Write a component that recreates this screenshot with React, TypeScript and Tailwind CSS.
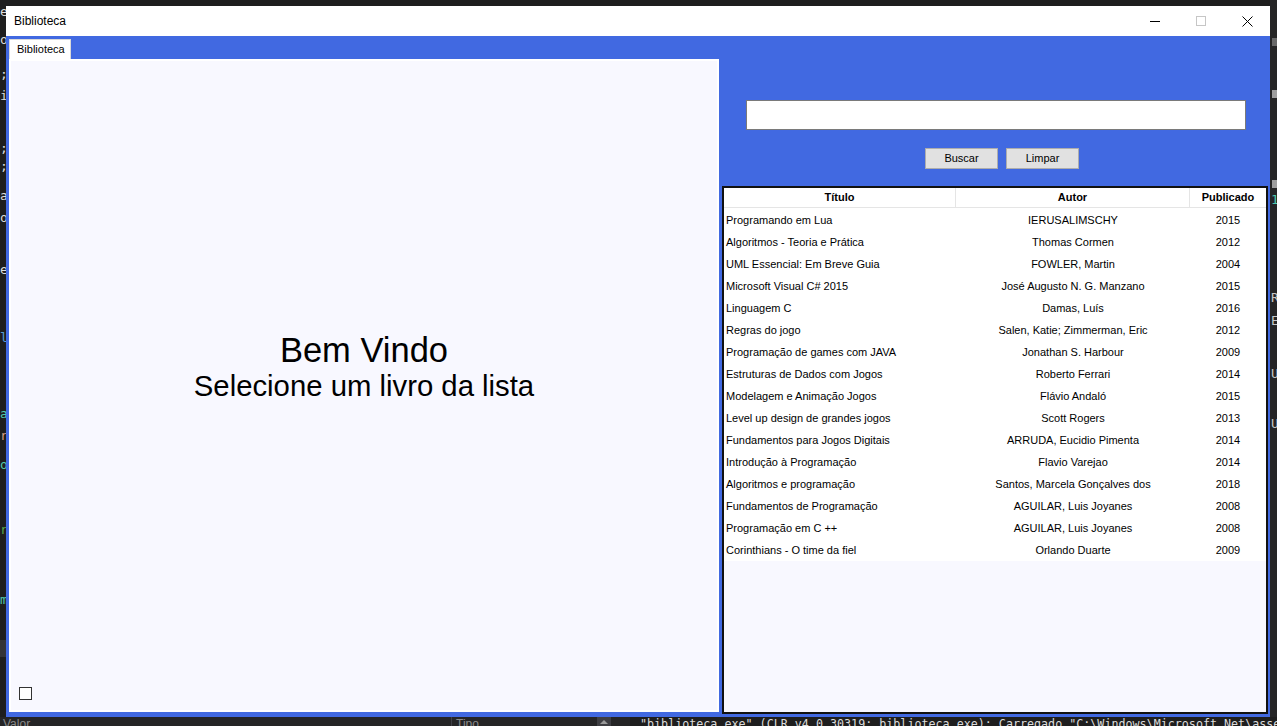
import React from 'react';

type Book = { titulo: string; autor: string; ano: string };

const books: Book[] = [
  { titulo: 'Programando em Lua', autor: 'IERUSALIMSCHY', ano: '2015' },
  { titulo: 'Algoritmos - Teoria e Prática', autor: 'Thomas Cormen', ano: '2012' },
  { titulo: 'UML Essencial: Em Breve Guia', autor: 'FOWLER, Martin', ano: '2004' },
  { titulo: 'Microsoft Visual C# 2015', autor: 'José Augusto N. G. Manzano', ano: '2015' },
  { titulo: 'Linguagem C', autor: 'Damas, Luís', ano: '2016' },
  { titulo: 'Regras do jogo', autor: 'Salen, Katie; Zimmerman, Eric', ano: '2012' },
  { titulo: 'Programação de games com JAVA', autor: 'Jonathan S. Harbour', ano: '2009' },
  { titulo: 'Estruturas de Dados com Jogos', autor: 'Roberto Ferrari', ano: '2014' },
  { titulo: 'Modelagem e Animação Jogos', autor: 'Flávio Andaló', ano: '2015' },
  { titulo: 'Level up design de grandes jogos', autor: 'Scott Rogers', ano: '2013' },
  { titulo: 'Fundamentos para Jogos Digitais', autor: 'ARRUDA, Eucidio Pimenta', ano: '2014' },
  { titulo: 'Introdução à Programação', autor: 'Flavio Varejao', ano: '2014' },
  { titulo: 'Algoritmos e programação', autor: 'Santos, Marcela Gonçalves dos', ano: '2018' },
  { titulo: 'Fundamentos de Programação', autor: 'AGUILAR, Luis Joyanes', ano: '2008' },
  { titulo: 'Programação em C ++', autor: 'AGUILAR, Luis Joyanes', ano: '2008' },
  { titulo: 'Corinthians - O time da fiel', autor: 'Orlando Duarte', ano: '2009' },
];

// bits of the code editor peeking out behind the window
const leftGlyphs = [
  { y: 4, ch: 'e', c: 'text-[#dcdcdc]' },
  { y: 32, ch: 'o', c: 'text-[#dcdcdc]' },
  { y: 66, ch: ';', c: 'text-[#dcdcdc]' },
  { y: 88, ch: 'i', c: 'text-[#dcdcdc]' },
  { y: 140, ch: ';', c: 'text-[#dcdcdc]' },
  { y: 158, ch: ';', c: 'text-[#dcdcdc]' },
  { y: 188, ch: 'a', c: 'text-[#dcdcdc]' },
  { y: 210, ch: 'o', c: 'text-[#dcdcdc]' },
  { y: 262, ch: 'e', c: 'text-[#dcdcdc]' },
  { y: 330, ch: 'l', c: 'text-[#569cd6]' },
  { y: 406, ch: 'a', c: 'text-[#4ec9b0]' },
  { y: 428, ch: 'r', c: 'text-[#d69d85]' },
  { y: 457, ch: 'o', c: 'text-[#4ec9b0]' },
  { y: 522, ch: 'r', c: 'text-[#57a64a]' },
  { y: 592, ch: 'm', c: 'text-[#4ec9b0]' },
];

const rightGlyphs = [
  { y: 192, ch: '1', c: 'text-[#4ec9b0]' },
  { y: 290, ch: 'R', c: 'text-[#c8c8c8]' },
  { y: 313, ch: 'E', c: 'text-[#c8c8c8]' },
  { y: 366, ch: 'U', c: 'text-[#c8c8c8]' },
  { y: 416, ch: 'U', c: 'text-[#c8c8c8]' },
];

const sans = "font-['Liberation_Sans',Arial,sans-serif]";

function TitleBar() {
  return (
    <div className="h-[30px] bg-white flex items-center shrink-0">
      <div className={`pl-[8px] text-[12px] text-black ${sans}`}>Biblioteca</div>
      <div className="ml-auto flex h-full">
        <div className="w-[46px] h-full flex items-center justify-center">
          <svg width="10" height="10" viewBox="0 0 10 10">
            <path d="M0 5.5h10" stroke="#000" strokeWidth="1" />
          </svg>
        </div>
        <div className="w-[46px] h-full flex items-center justify-center">
          <svg width="10" height="10" viewBox="0 0 10 10">
            <rect x="0.5" y="0.5" width="9" height="9" fill="none" stroke="#c6c6c6" strokeWidth="1" />
          </svg>
        </div>
        <div className="w-[46px] h-full flex items-center justify-center">
          <svg width="11" height="11" viewBox="0 0 11 11">
            <path d="M0.5 0.5l10 10M10.5 0.5l-10 10" stroke="#000" strokeWidth="1" />
          </svg>
        </div>
      </div>
    </div>
  );
}

function WelcomeTab() {
  return (
    <div className="w-[713px] pl-[3px] pt-[3px] pb-[5px] flex flex-col shrink-0">
      <div className="h-[20px] flex shrink-0">
        <div className={`w-[62px] h-[20px] bg-white border border-b-0 border-[#d9d9d9] pl-[7px] text-[11px] leading-[19px] text-black ${sans}`}>
          Biblioteca
        </div>
      </div>
      <div className="flex-1 bg-[#f8f8ff] border-2 border-white flex flex-col">
        <div className={`pt-[270px] flex flex-col items-center text-black ${sans}`}>
          <div className="text-[34.5px] leading-[38px]">Bem Vindo</div>
          <div className="text-[29.3px] leading-[34px]">Selecione um livro da lista</div>
        </div>
        <div className="mt-auto pl-[8px] pb-[10px]">
          <div className="w-[13px] h-[13px] bg-white border border-[#333333]" />
        </div>
      </div>
    </div>
  );
}

function BookList() {
  return (
    <div className="flex-1 ml-[3px] mr-[2px] mb-[3px] border-2 border-[#111111] bg-[#f8f8ff] flex flex-col">
      <div className={`h-[20px] bg-white border-b border-[#e5e5e5] flex text-[11px] font-bold text-black ${sans}`}>
        <div className="w-[232px] border-r border-[#e5e5e5] flex items-center justify-center">Título</div>
        <div className="w-[234px] border-r border-[#e5e5e5] flex items-center justify-center">Autor</div>
        <div className="flex-1 flex items-center justify-center">Publicado</div>
      </div>
      <div className={`bg-white pt-[1px] text-[11px] text-black ${sans}`}>
        {books.map((b) => (
          <div key={b.titulo} className="h-[22px] flex items-center">
            <div className="w-[232px] pl-[2px] whitespace-nowrap">{b.titulo}</div>
            <div className="w-[234px] text-center whitespace-nowrap">{b.autor}</div>
            <div className="flex-1 text-center">{b.ano}</div>
          </div>
        ))}
      </div>
    </div>
  );
}

function SearchSide() {
  return (
    <div className="flex-1 flex flex-col">
      <div className="pt-[64px] pl-[27px]">
        <div className="w-[500px] h-[30px] bg-white border border-[#7a7a7a]" />
      </div>
      <div className={`pt-[18px] pl-[206px] flex gap-[8px] text-[11px] text-black ${sans}`}>
        <button className="w-[73px] h-[21px] bg-[#e1e1e1] border border-[#adadad] flex items-center justify-center">Buscar</button>
        <button className="w-[73px] h-[21px] bg-[#e1e1e1] border border-[#adadad] flex items-center justify-center">Limpar</button>
      </div>
      <div className="h-[17px] shrink-0" />
      <BookList />
    </div>
  );
}

export default function App() {
  return (
    <div className="w-[1277px] h-[726px] bg-[#1e1e1e] overflow-hidden flex flex-col">
      <div className="flex h-[717px] shrink-0">
        <div className="w-[6px] relative overflow-hidden font-['DejaVu_Sans_Mono',monospace] text-[13px] leading-[16px]">
          {leftGlyphs.map((g) => (
            <div key={g.y} className={`absolute left-0 ${g.c}`} style={{ top: g.y }}>{g.ch}</div>
          ))}
          <div className="absolute left-0 w-full h-[17px] bg-[#333337]" style={{ top: 640 }} />
        </div>
        <div className="w-[1264px] mt-[6px] flex flex-col bg-[#4169e1]">
          <TitleBar />
          <div className="flex-1 flex">
            <WelcomeTab />
            <SearchSide />
          </div>
        </div>
        <div className="flex-1 relative overflow-hidden bg-[#252526] font-['DejaVu_Sans_Mono',monospace] text-[13px] leading-[16px]">
          <div className="absolute left-[2px] w-[5px] h-[8px] bg-[#686868]" style={{ top: 38 }} />
          <div className="absolute left-[2px] w-[5px] h-[8px] bg-[#9e9e9e]" style={{ top: 90 }} />
          <div className="absolute left-[2px] w-[5px] h-[8px] bg-[#9e9e9e]" style={{ top: 180 }} />
          {rightGlyphs.map((g) => (
            <div key={g.y} className={`absolute left-[1px] ${g.c}`} style={{ top: g.y }}>{g.ch}</div>
          ))}
        </div>
      </div>
      <div className="flex-1 flex overflow-hidden">
        <div className="w-[630px] shrink-0 bg-[#252526] flex items-start text-[12px] leading-[14px] text-[#8a8a8a] font-['Liberation_Sans',sans-serif]">
          <div className="w-[452px] pl-[3px] border-r border-[#3f3f46]">Valor</div>
          <div className="pl-[4px] w-[145px]">Tipo</div>
          <div className="w-[14px] h-[9px] bg-[#3e3e42] flex justify-center pt-[3px]">
            <div className="w-0 h-0 border-l-[4px] border-r-[4px] border-b-[4px] border-l-transparent border-r-transparent border-b-[#999999]" />
          </div>
        </div>
        <div className="flex-1 min-w-0 bg-[#1e1e1e] pl-[10px] whitespace-nowrap overflow-hidden font-['DejaVu_Sans_Mono',monospace] text-[11.7px] leading-[15px] text-[#dcdcdc]">
          "biblioteca.exe" (CLR v4.0.30319: biblioteca.exe): Carregado "C:\Windows\Microsoft.Net\assembly"
        </div>
      </div>
    </div>
  );
}
